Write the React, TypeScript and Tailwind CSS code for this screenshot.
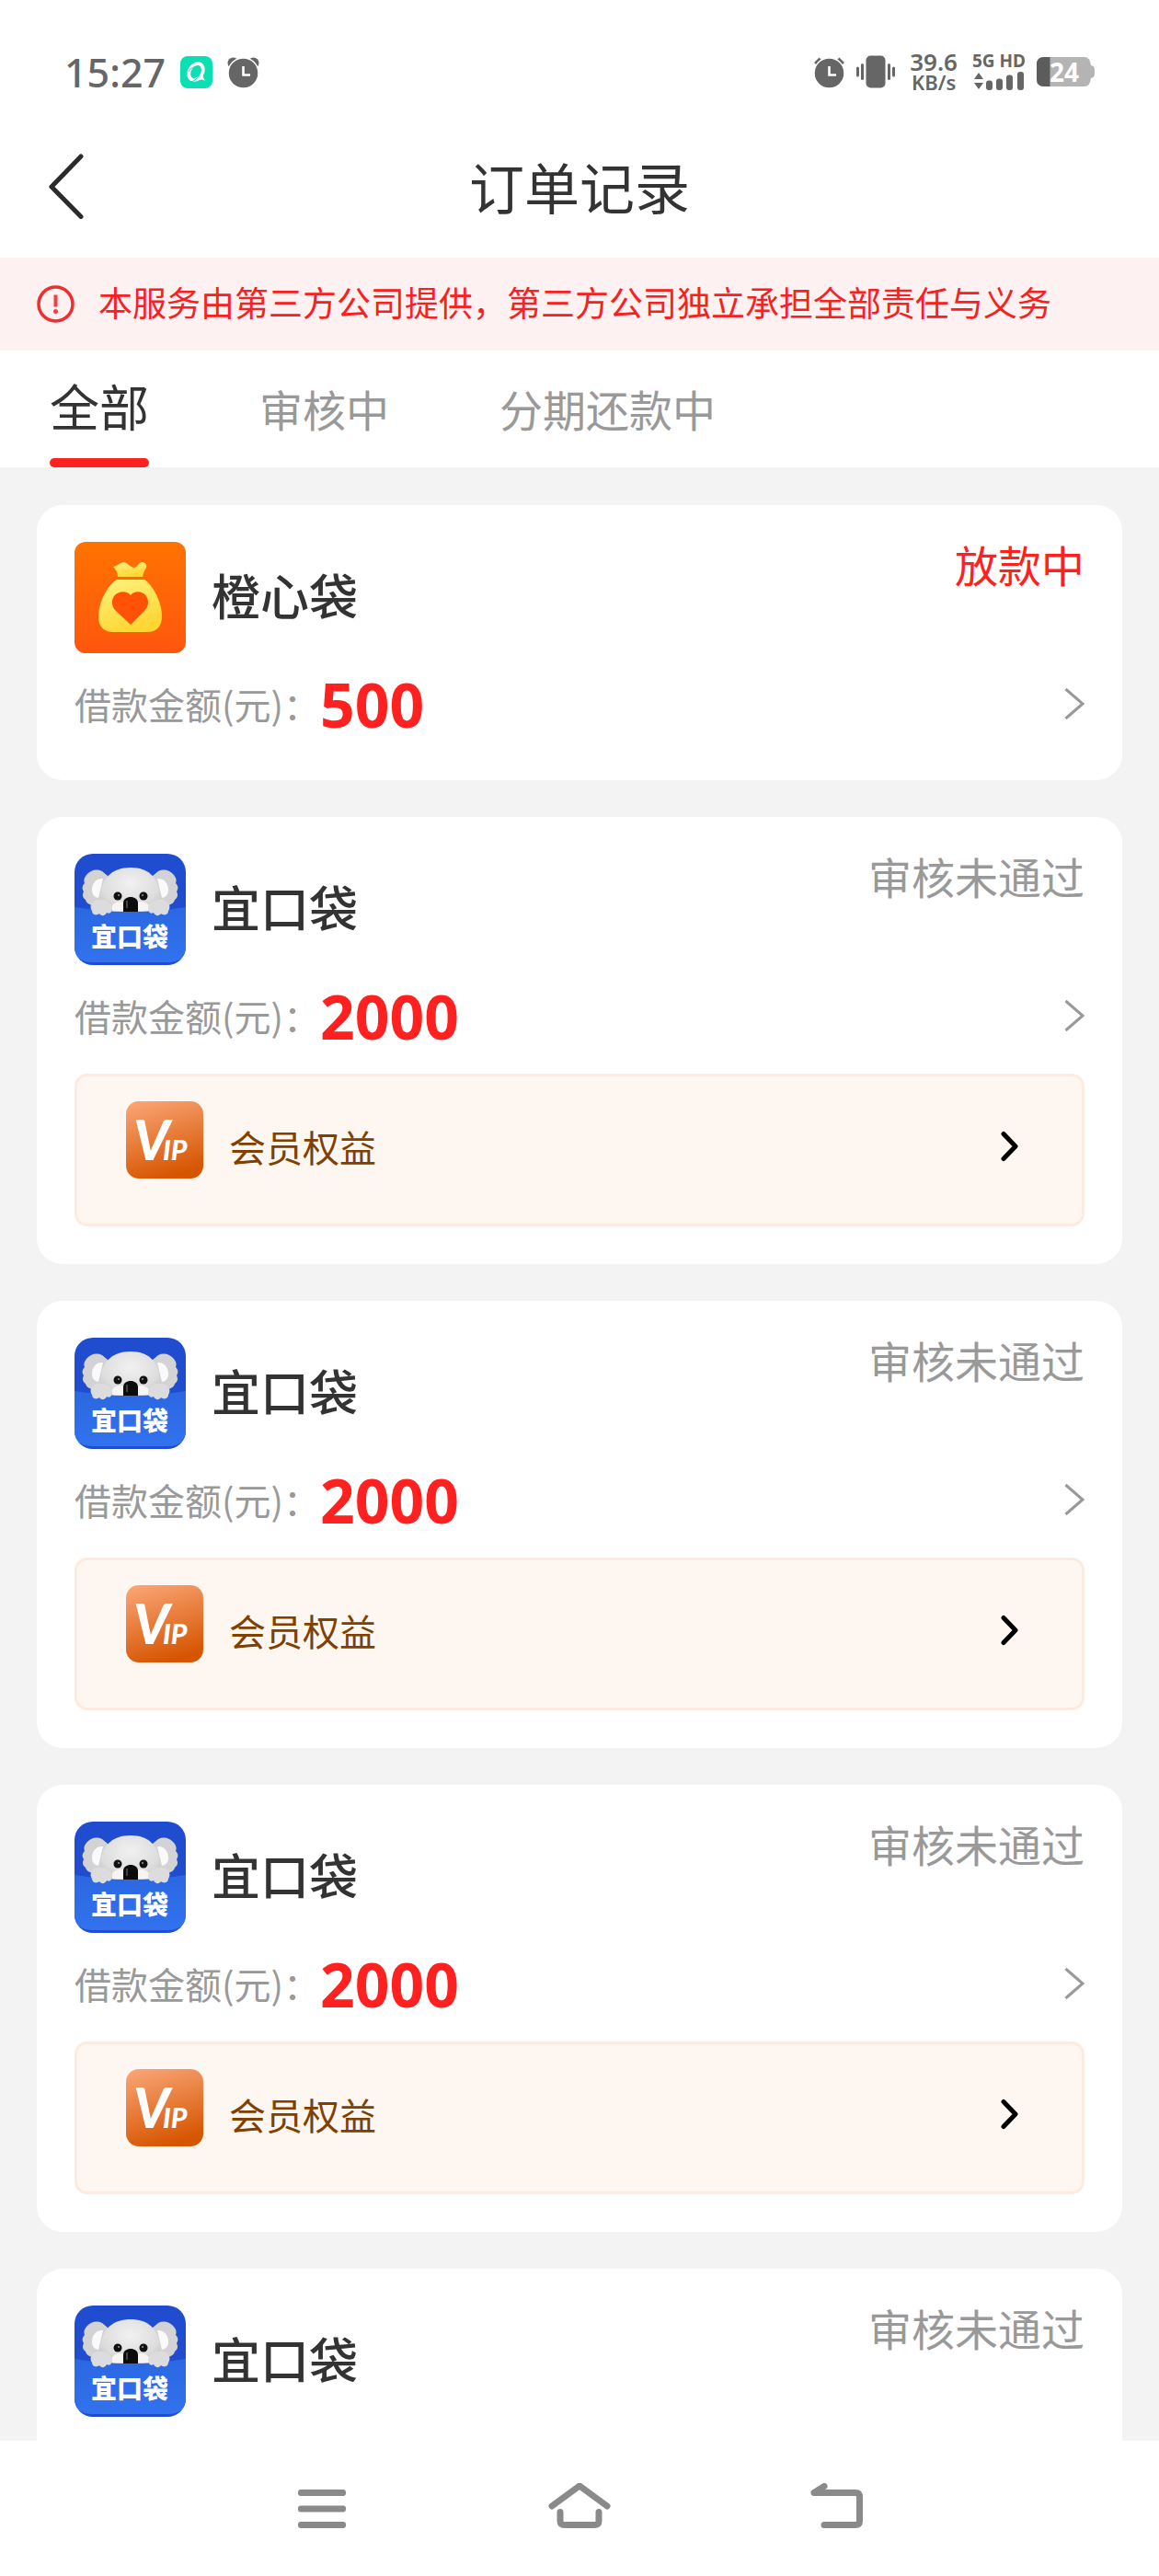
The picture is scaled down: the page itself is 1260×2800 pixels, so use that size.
import clsx from "clsx";

type Order = {
  id: number;
  name: string;
  amount: number;
  status: string;
  active?: boolean;
  vip?: boolean;
};

const tabs = ["全部", "审核中", "分期还款中"];

const orders: Order[] = [
  { id: 1, name: "橙心袋", amount: 500, status: "放款中", active: true },
  { id: 2, name: "宜口袋", amount: 2000, status: "审核未通过", vip: true },
  { id: 3, name: "宜口袋", amount: 2000, status: "审核未通过", vip: true },
  { id: 4, name: "宜口袋", amount: 2000, status: "审核未通过", vip: true },
  { id: 5, name: "宜口袋", amount: 2000, status: "审核未通过", vip: true },
];

const AssistantIcon = () => (
  <svg width="35" height="35" viewBox="0 0 35 35">
    <rect width="35" height="35" rx="8" fill="#0ddfb5" />
    <ellipse
      cx="17"
      cy="17"
      rx="7"
      ry="9.500"
      transform="rotate(32 17 17)"
      fill="none"
      stroke="#fff"
      strokeWidth="3.800"
    />
    <path d="M23 13c0 5 1 9 4 14-3-2-6-2-9 1 2-5 4-9 5-15z" fill="#fff" />
    <path d="M11 28c6-1 10-6 12-14M9 17c2-4 6-6 11-6" fill="none" stroke="#0ddfb5" strokeWidth="1" />
  </svg>
);

const AlarmIcon = ({ bells }: { bells?: boolean }) => (
  <svg width="35" height="35" viewBox="0 0 35 35">
    {bells ? (
      <path d="M2.500 8.500 8 3M32.500 8.500 27 3" stroke="#666" strokeWidth="4" />
    ) : (
      <>
        <circle cx="6.500" cy="7.500" r="6" fill="#666" />
        <circle cx="28.500" cy="7.500" r="6" fill="#666" />
      </>
    )}
    <circle
      cx="17.500"
      cy="18.500"
      r="16.500"
      fill="#666"
      stroke="#fff"
      strokeWidth="1.500"
    />
    <path d="M17.500 11v9.500H25" fill="none" stroke="#fff" strokeWidth="2.600" />
  </svg>
);

const VibrateIcon = () => (
  <svg width="42" height="36" viewBox="0 0 42 36" fill="#666">
    <rect x="10.500" y="0.500" width="21" height="35" rx="5" />
    <rect x="5" y="9" width="3" height="18" rx="1.500" />
    <rect x="34" y="9" width="3" height="18" rx="1.500" />
    <rect x="0" y="12.500" width="3" height="11" rx="1.500" />
    <rect x="39" y="12.500" width="3" height="11" rx="1.500" />
  </svg>
);

const SignalIcon = () => (
  <svg width="56" height="20" viewBox="0 0 56 20" fill="#666">
    <path d="M6 1l5 7H1zM6 19l5-7H1z" />
    <rect x="14" y="9.500" width="7" height="10.500" rx="3" />
    <rect x="25" y="7.500" width="7" height="12.500" rx="3" />
    <rect x="36" y="3.500" width="7" height="16.500" rx="3" />
    <rect x="48" y="0" width="7" height="20" rx="3" />
  </svg>
);

const BatteryIcon = () => (
  <svg width="63" height="32" viewBox="0 0 63 32" className="overflow-visible">
    <path d="M8 0h44q6 0 7 9c4 1 4 3 4 7s0 6-4 7q-1 9-7 9H8q-8 0-8-8V8q0-8 8-8z" fill="#b4b4b4" />
    <path d="M14.500 0v32H8q-8 0-8-8V8q0-8 8-8z" fill="#5c5c5c" />
    <text
      x="14"
      y="27"
      fill="#fff"
      fontSize="28"
      fontWeight="700"
      fontFamily="'Noto Sans', sans-serif"
    >
      24
    </text>
  </svg>
);

const StatusBar = () => (
  <div className="flex h-[124px] shrink-0 items-center justify-between px-[70px] pt-8 font-['Noto_Sans',sans-serif] text-[#666]">
    <div className="flex items-center gap-4">
      <span className="text-[43px] leading-none font-medium">15:27</span>
      <AssistantIcon />
      <AlarmIcon />
    </div>
    <div className="flex items-center gap-3">
      <AlarmIcon bells />
      <VibrateIcon />
      <div className="flex flex-col items-center px-1 font-semibold">
        <span className="text-[26px] leading-[22px]">39.6</span>
        <span className="text-[22px] leading-[22px]">KB/s</span>
      </div>
      <div className="flex flex-col items-center gap-1">
        <span className="text-[19px] leading-4 font-bold">5G HD</span>
        <SignalIcon />
      </div>
      <BatteryIcon />
    </div>
  </div>
);

const BagLogo = () => (
  <svg width="121" height="121" viewBox="0 0 121 121" className="shrink-0">
    <defs>
      <linearGradient id="bagBg" x1="0" y1="0" x2="0" y2="1">
        <stop offset="0" stopColor="#ff7300" />
        <stop offset="1" stopColor="#ff560f" />
      </linearGradient>
      <linearGradient id="bagFill" x1="0.200" y1="0" x2="0.600" y2="1">
        <stop offset="0" stopColor="#fff07a" />
        <stop offset="1" stopColor="#ffd530" />
      </linearGradient>
    </defs>
    <rect width="121" height="121" rx="12" fill="url(#bagBg)" />
    <path
      d="M42 27c5-1 7-4 11-5 5 0 7 6 12 6 4-1 4-6 9-6 5 1 5 5 3 8-2 3-2 5-3 8H47c0-5-2-8-5-11z"
      fill="url(#bagFill)"
    />
    <path
      d="M46 41h30c9 6 19 24 19 40 0 11-6 17-16 17H42c-10 0-16-6-16-16 0-17 10-35 20-41z"
      fill="url(#bagFill)"
    />
    <path
      d="M61 90 45 75c-5-5-5-12-2-16 5-6 14-6 18-1 4-5 13-5 17 1 3 4 3 11-2 16z"
      fill="#ff5206"
    />
  </svg>
);

const KoalaLogo = () => (
  <svg width="121" height="121" viewBox="0 0 121 121" className="shrink-0">
    <defs>
      <radialGradient id="fur" cx="0.500" cy="0.350" r="0.700">
        <stop offset="0" stopColor="#f1f1f1" />
        <stop offset="0.700" stopColor="#dddddd" />
        <stop offset="1" stopColor="#c4c4c6" />
      </radialGradient>
      <linearGradient id="pocket" x1="0" y1="0" x2="0" y2="1">
        <stop offset="0" stopColor="#2b67e2" />
        <stop offset="1" stopColor="#3272ee" />
      </linearGradient>
    </defs>
    <rect width="121" height="121" rx="20" fill="#204dcf" />
    <path
      d="M30 19c-6-3-13-1-17 4-3 4-3 6-2 9-3 3-3 6-1 9-2 4-1 7 2 9 1 4 5 6 10 6h14V24zM91 19c6-3 13-1 17 4 3 4 3 6 2 9 3 3 3 6 1 9 2 4 1 7-2 9-1 4-5 6-10 6H85V24z"
      fill="#d3d3d5"
    />
    <path
      d="M31 27c-7-1-12 5-12 12 0 5 2 8 7 9zM90 27c7-1 12 5 12 12 0 5-2 8-7 9z"
      fill="#fafafa"
    />
    <path d="M61 15c20 0 28 11 31 24 2 10 0 20-3 25H33c-4-5-6-15-4-25 3-13 12-24 32-24z" fill="url(#fur)" />
    <path d="M41 56c4-4 9-5 13-3v11H41zM81 56c-4-4-9-5-13-3v11h13z" fill="#f8f4f2" />
    <path d="M0 58q60 10 121 0v43q0 17-20 17H20q-20 0-20-17z" fill="url(#pocket)" />
    <circle cx="47" cy="46" r="4.500" fill="#111" />
    <circle cx="75" cy="46" r="4.500" fill="#111" />
    <circle cx="48" cy="45" r="1" fill="#999" />
    <circle cx="74" cy="45" r="1" fill="#999" />
    <path d="M53 63V54c0-5 4-7 8-7s8 2 8 7v9z" fill="#0c0c0c" />
    <path d="M57 51v8" stroke="#555" strokeWidth="1.500" />
    <path
      d="M22 51c8-3 17 0 19 7 0 5-2 8-6 6-2 4-6 4-8 1-4 3-8 1-8-3-3-4-1-9 3-11zM99 51c-8-3-17 0-19 7 0 5 2 8 6 6 2 4 6 4 8 1 4 3 8 1 8-3 3-4 1-9-3-11z"
      fill="#dcdcde"
    />
    <text
      x="18"
      y="101"
      fill="#fff"
      fontSize="28"
      fontWeight="900"
      fontFamily="'Noto Sans CJK SC', sans-serif"
    >
      宜口袋
    </text>
  </svg>
);

const VipLogo = () => (
  <svg
    width="84"
    height="84"
    viewBox="0 0 84 84"
    className="shrink-0 self-start overflow-visible"
  >
    <defs>
      <linearGradient id="vipBg" x1="0.200" y1="0" x2="0.500" y2="1">
        <stop offset="0" stopColor="#f9a373" />
        <stop offset="1" stopColor="#d65500" />
      </linearGradient>
    </defs>
    <rect width="84" height="84" rx="14" fill="url(#vipBg)" />
    <text
      x="8"
      y="64"
      fill="#fff"
      fontSize="60"
      fontWeight="900"
      fontStyle="italic"
      fontFamily="Lato, sans-serif"
    >
      V
      <tspan x="40" fontSize="30">
        IP
      </tspan>
    </text>
  </svg>
);

const VipEntry = () => (
  <button
    type="button"
    className="mt-2 mb-[13px] flex w-full rounded-[14px] border-[3px] border-[#fcebe0] bg-[#fef7f1] px-[53px] pt-[27px] pb-[35px]"
  >
    <span className="flex h-[98px] flex-1 items-center">
      <VipLogo />
      <span className="ml-7 text-[40px] leading-[48px] text-[#804000]">
        会员权益
      </span>
      <svg width="32" height="34" viewBox="0 0 32 34" className="mr-2 ml-auto">
        <path
          d="M8 3.500 21 17 8 30.500"
          fill="none"
          stroke="#000"
          strokeWidth="5"
          strokeLinecap="round"
          strokeLinejoin="round"
        />
      </svg>
    </span>
  </button>
);

const OrderCard = ({ order }: { order: Order }) => (
  <article className="shrink-0 rounded-[28px] bg-white px-[41px] pt-10 pb-7">
    <div className="flex items-center">
      {order.vip ? <KoalaLogo /> : <BagLogo />}
      <h2 className="ml-7 flex-1 pb-2 text-[53px] leading-[60px] font-medium text-[#333]">
        {order.name}
      </h2>
      <span
        className={clsx(
          "self-start text-[47px] leading-[48px]",
          order.active ? "text-[#ff2020]" : "text-[#999]"
        )}
      >
        {order.status}
      </span>
    </div>
    <a href="#order" className="flex h-[110px] items-center">
      <span className="text-[40px] leading-[48px] text-[#999]">
        借款金额(元)：
      </span>
      <span className="flex-1 font-['Noto_Sans',sans-serif] text-[66px] leading-[66px] font-bold text-[#ff2020]">
        {order.amount}
      </span>
      <svg width="22" height="36" viewBox="0 0 22 36">
        <path d="M1.500 2 20 18 1.500 34" fill="none" stroke="#999" strokeWidth="3" />
      </svg>
    </a>
    {order.vip && <VipEntry />}
  </article>
);

const NavBar = () => (
  <nav className="flex h-[147px] shrink-0 justify-center bg-white">
    <div className="flex w-2/3">
      <button type="button" aria-label="菜单" className="flex flex-1 items-center justify-center">
        <svg width="68" height="56" viewBox="0 0 68 56" fill="#8a8a8a">
          <rect x="8" y="7" width="52" height="7" rx="3" />
          <rect x="8" y="24.500" width="52" height="7" rx="3" />
          <rect x="8" y="42" width="52" height="7" rx="3" />
        </svg>
      </button>
      <button type="button" aria-label="主页" className="flex flex-1 items-center justify-center">
        <svg
          width="68"
          height="56"
          viewBox="0 0 68 56"
          fill="none"
          stroke="#8a8a8a"
          strokeWidth="7"
          strokeLinecap="round"
          strokeLinejoin="round"
        >
          <path d="M4 25 34 3l30 22" />
          <path d="M13 31.500V41q0 4.500 5 4.500h32q5 0 5-4.500v-9.500" />
        </svg>
      </button>
      <button type="button" aria-label="返回" className="flex flex-1 items-center justify-center">
        <svg
          width="68"
          height="56"
          viewBox="0 0 68 56"
          fill="none"
          stroke="#8a8a8a"
          strokeWidth="7"
          strokeLinecap="round"
          strokeLinejoin="round"
        >
          <path d="M20 3.500 9 10.500h45q4.500 0 4.500 4.500v26q0 4.500-4.500 4.500H20" />
        </svg>
      </button>
    </div>
  </nav>
);

const App = () => {
  return (
    <div className="flex h-screen flex-col bg-[#f3f3f3] font-['Noto_Sans_CJK_SC',sans-serif]">
      <div className="shrink-0 bg-white">
        <StatusBar />
        <header className="grid h-[156px] grid-cols-[1fr_auto_1fr] items-center px-[50px]">
          <button type="button" aria-label="返回上一页" className="justify-self-start">
            <svg width="44" height="72" viewBox="0 0 44 72">
              <path
                d="M38 4 6 37l32 32.500"
                fill="none"
                stroke="#2b2b2b"
                strokeWidth="5"
                strokeLinecap="round"
                strokeLinejoin="round"
              />
            </svg>
          </button>
          <h1 className="text-[60px] leading-[72px] text-[#333]">订单记录</h1>
        </header>
        <div className="flex items-center gap-[26px] bg-[#fef1f1] px-10 py-6 text-[37px] leading-[49px] text-[#f62222]">
          <svg width="41" height="41" viewBox="0 0 41 41" className="shrink-0">
            <circle cx="20.500" cy="20.500" r="18.500" fill="none" stroke="#ef2f2f" strokeWidth="3.500" />
            <path d="M20.500 10.500v13" stroke="#ef4040" strokeWidth="4" />
            <circle cx="20.500" cy="28.500" r="2.500" fill="#ef4040" />
          </svg>
          <p className="pb-1">本服务由第三方公司提供，第三方公司独立承担全部责任与义务</p>
        </div>
        <div role="tablist" className="flex items-baseline gap-[120px] px-[54px] pt-[33px]">
          {tabs.map((tab, i) => (
            <button
              key={tab}
              type="button"
              role="tab"
              aria-selected={i === 0}
              className={clsx(
                "relative leading-[54px]",
                i === 0
                  ? "pb-10 text-[54px] text-[#333]"
                  : "pb-8 text-[47px] text-[#999]"
              )}
            >
              {tab}
              {i === 0 && (
                <span className="absolute inset-x-0 bottom-0 h-[10px] rounded-full bg-[#ff2020]" />
              )}
            </button>
          ))}
        </div>
      </div>
      <main className="flex min-h-0 flex-1 flex-col gap-10 overflow-y-auto px-10 pt-[41px] pb-10 [scrollbar-width:none]">
        {orders.map((order) => (
          <OrderCard key={order.id} order={order} />
        ))}
      </main>
      <NavBar />
    </div>
  );
};

export default App;
